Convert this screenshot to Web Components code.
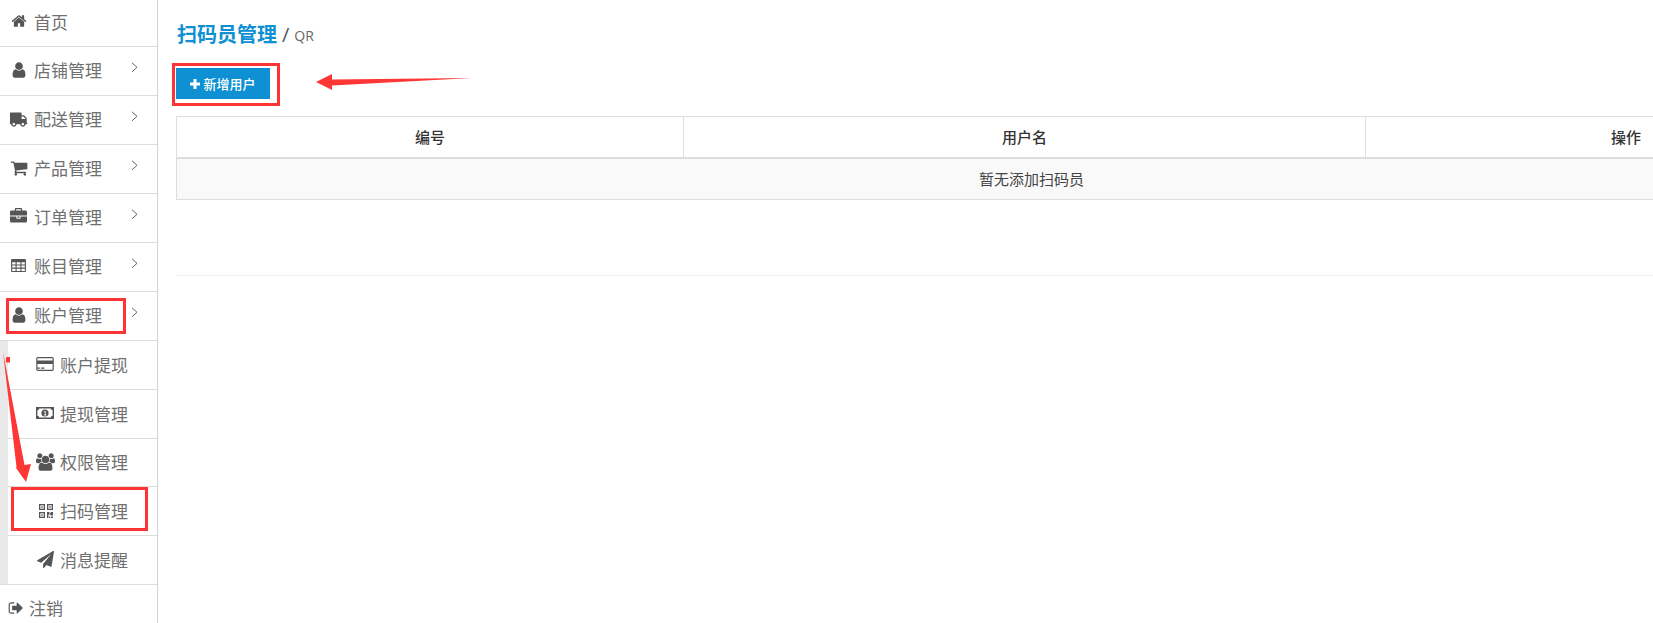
<!DOCTYPE html>
<html lang="zh">
<head>
<meta charset="utf-8">
<title>扫码员管理</title>
<style>
  html, body { margin: 0; padding: 0; height: 100%; background: #fff; overflow: hidden; }
  body { font-family: "Open Sans", "Noto Sans CJK SC", sans-serif; }
</style>
</head>
<body>
<admin-shell>
  <side-nav slot="nav">
    <nav-item icon="home" first>首页</nav-item>
    <nav-item icon="user" arrow>店铺管理</nav-item>
    <nav-item icon="truck" arrow>配送管理</nav-item>
    <nav-item icon="cart" arrow>产品管理</nav-item>
    <nav-item icon="briefcase" arrow>订单管理</nav-item>
    <nav-item icon="table" arrow>账目管理</nav-item>
    <nav-item icon="user" arrow>账户管理</nav-item>
    <nav-group>
      <nav-item icon="card" sub>账户提现</nav-item>
      <nav-item icon="money" sub>提现管理</nav-item>
      <nav-item icon="users" sub>权限管理</nav-item>
      <nav-item icon="qrcode" sub>扫码管理</nav-item>
      <nav-item icon="plane" sub>消息提醒</nav-item>
    </nav-group>
    <nav-item icon="signout" out>注销</nav-item>
  </side-nav>
  <page-head>扫码员管理<span slot="sub">QR</span></page-head>
  <add-button>新增用户</add-button>
  <data-table empty="暂无添加扫码员"></data-table>
</admin-shell>
<mark-layer></mark-layer>

<script>
// icon paths, font-awesome style shapes
const icons = {
  home: ['0 0 1792 1792', 'M1472 992v480q0 26-19 45t-45 19h-384v-384h-256v384h-384q-26 0-45-19t-19-45v-480q0-1 .5-3t.5-3l575-474 575 474q1 2 1 6zm223-69l-62 74q-8 9-21 11h-3q-13 0-21-7l-692-577-692 577q-12 8-24 7-13-2-21-11l-62-74q-8-10-7-23.5t11-21.5l719-599q32-26 76-26t76 26l244 204v-195q0-14 9-23t23-9h192q14 0 23 9t9 23v408l219 182q10 8 11 21.5t-7 23.5z'],
  user: ['0 0 1792 1792', 'M1536 1399q0 109-62.5 187t-150.5 78h-854q-88 0-150.5-78t-62.5-187q0-85 8.5-160.5t31.5-152 58.5-131 94-89 134.5-34.5q131 128 313 128t313-128q76 0 134.5 34.5t94 89 58.5 131 31.5 152 8.5 160.5zm-256-887q0 159-112.5 271.5t-271.5 112.5-271.5-112.5-112.5-271.5 112.5-271.5 271.5-112.5 271.5 112.5 112.5 271.5z'],
  truck: ['0 0 1792 1792', 'M640 1408q0-52-38-90t-90-38-90 38-38 90 38 90 90 38 90-38 38-90zm-384-512h384v-256h-158q-13 0-22 9l-195 195q-9 9-9 22v30zm1280 512q0-52-38-90t-90-38-90 38-38 90 38 90 90 38 90-38 38-90zm256-1088v1024q0 15-4 26.5t-13.5 18.5-16.5 11.5-23.5 6-22.5 2-25.5 0-22.5-.5q0 106-75 181t-181 75-181-75-75-181h-384q0 106-75 181t-181 75-181-75-75-181h-64q-3 0-22.5.5t-25.5 0-22.5-2-23.5-6-16.5-11.5-13.5-18.5-4-26.5q0-26 19-45t45-19v-320q0-8-.5-35t0-38 2.5-34.5 6.5-37 14-30.5 22.5-30l198-198q19-19 50.5-32t58.5-13h160v-192q0-26 19-45t45-19h1024q26 0 45 19t19 45z', 'scale(-1,1) translate(-1792,0)'],
  cart: ['0 0 1792 1792', 'M704 1536q0 52-38 90t-90 38-90-38-38-90 38-90 90-38 90 38 38 90zm896 0q0 52-38 90t-90 38-90-38-38-90 38-90 90-38 90 38 38 90zm128-1088v512q0 24-16.5 42.5t-40.5 21.5l-1044 122q13 60 13 70 0 16-24 64h920q26 0 45 19t19 45-19 45-45 19h-1024q-26 0-45-19t-19-45q0-11 8-31.5t16-36 21.5-40 15.5-29.5l-177-823h-204q-26 0-45-19t-19-45 19-45 45-19h256q16 0 28.5 6.5t19.5 15.5 13 24.5 8 26 5.5 29.5 4.5 26h1201q26 0 45 19t19 45z'],
  briefcase: ['0 0 1792 1792', 'M640 256h512v-128h-512v128zm1152 640v480q0 66-47 113t-113 47h-1472q-66 0-113-47t-47-113v-480h672v160q0 26 19 45t45 19h320q26 0 45-19t19-45v-160h672zm-768 0v128h-256v-128h256zm768-480v384h-1792v-384q0-66 47-113t113-47h352v-160q0-40 28-68t68-28h576q40 0 68 28t28 68v160h352q66 0 113 47t47 113z'],
  table: ['0 0 16 14', 'M1 0h14a1 1 0 0 1 1 1v12a1 1 0 0 1-1 1H1a1 1 0 0 1-1-1V1a1 1 0 0 1 1-1zm.2 3.4v2.4h3.6V3.4zm4.8 0v2.4h4V3.4zm5.2 0v2.4h3.6V3.4zM1.2 7v2.2h3.6V7zM6 7v2.2h4V7zm5.2 0v2.2h3.6V7zM1.2 10.4v2.4h3.6v-2.4zm4.8 0v2.4h4v-2.4zm5.2 0v2.4h3.6v-2.4z'],
  card: ['0 128 1920 1536', 'M1760 128q66 0 113 47t47 113v1216q0 66-47 113t-113 47h-1600q-66 0-113-47t-47-113v-1216q0-66 47-113t113-47h1600zm-1600 128q-13 0-22.5 9.5t-9.5 22.5v224h1664v-224q0-13-9.5-22.5t-22.5-9.5h-1600zm1600 1280q13 0 22.5-9.5t9.5-22.5v-608h-1664v608q0 13 9.5 22.5t22.5 9.5h1600zm-1632-128v-128h256v128h-256zm384 0v-128h384v128h-384z'],
  money: ['0 0 18 12', 'M0 0h18v12H0zm3.2 1.4a1.8 1.8 0 0 1-1.8 1.8v5.6a1.8 1.8 0 0 1 1.8 1.8h11.6a1.8 1.8 0 0 1 1.8-1.8V3.2a1.8 1.8 0 0 1-1.8-1.8zM9 2.4a3.6 3.6 0 1 1 0 7.2 3.6 3.6 0 0 1 0-7.2zM8.1 8.4h2.2v-.8h-.7V3.9h-.8l-1 .8.5.6.5-.3v2.6h-.7z'],
  users: ['0 0 1920 1792', 'M593 896q-162 5-265 128h-134q-82 0-138-40.5t-56-118.5q0-353 124-353 6 0 43.5 21t97.5 42.5 119 21.5q67 0 133-23-5 37-5 66 0 139 81 256zm1071 637q0 120-73 189.5t-194 69.5h-874q-121 0-194-69.5t-73-189.5q0-53 3.5-103.5t14-109 26.5-108.5 43-97.5 62-81 85.5-53.5 111.5-20q10 0 43 21.5t73 48 107 48 135 21.5 135-21.5 107-48 73-48 43-21.5q61 0 111.5 20t85.5 53.5 62 81 43 97.5 26.5 108.5 14 109 3.5 103.5zm-1024-1277q0 106-75 181t-181 75-181-75-75-181 75-181 181-75 181 75 75 181zm704 384q0 159-112.5 271.5t-271.5 112.5-271.5-112.5-112.5-271.5 112.5-271.5 271.5-112.5 271.5 112.5 112.5 271.5zm576 225q0 78-56 118.5t-138 40.5h-134q-103-123-265-128 81-117 81-256 0-29-5-66 66 23 133 23 59 0 119-21.5t97.5-42.5 43.5-21q124 0 124 353zm-128-609q0 106-75 181t-181 75-181-75-75-181 75-181 181-75 181 75 75 181z'],
  qrcode: ['0 0 14 14', 'M0 0h6v6H0zm1.3 1.3v3.4h3.4V1.3zM2.3 2.3h1.4v1.4H2.3zM8 0h6v6H8zm1.3 1.3v3.4h3.4V1.3zm1 1h1.4v1.4h-1.4zM0 8h6v6H0zm1.3 1.3v3.4h3.4V9.3zm1 1h1.4v1.4H2.3zM8 8h2.4v1.4h1.2V8H14v3.6h-2.4v-1H9.4V14H8zm4 4.6h2V14h-2zm-2 0h1.2V14H10z'],
  plane: ['0 0 1792 1792', 'M1764 11q33 24 27 64l-256 1536q-5 29-32 45-14 8-31 8-11 0-24-5l-453-185-242 295q-18 23-49 23-13 0-22-4-19-7-30.5-23.5t-11.5-36.5v-349l864-1059-1069 925-395-162q-37-14-40-55-2-40 32-59l1664-960q15-9 32-9 20 0 36 11z'],
  signout: ['0 0 1664 1792', 'M704 1440q0 4 1 20t.5 26.5-3 23.5-10 19.5-20.5 6.5h-320q-119 0-203.5-84.5t-84.5-203.5v-704q0-119 84.5-203.5t203.5-84.5h320q13 0 22.5 9.5t9.5 22.5q0 4 1 20t.5 26.5-3 23.5-10 19.5-20.5 6.5h-320q-66 0-113 47t-47 113v704q0 66 47 113t113 47h312l11.5 1 11.5 3 8 5.5 7 9 2 13.5zm928-544q0 26-19 45l-544 544q-19 19-45 19t-45-19-19-45v-288h-448q-26 0-45-19t-19-45v-384q0-26 19-45t45-19h448v-288q0-26 19-45t45-19 45 19l544 544q19 19 19 45z'],
  plus: ['0 0 12 12', 'M4.2 0h3.6v4.2H12v3.6H7.8V12H4.2V7.8H0V4.2h4.2z']
};

function iconSvg(name, w, h) {
  const [box, d, tf] = icons[name];
  return `<svg width="${w}" height="${h}" viewBox="${box}" fill="currentColor" aria-hidden="true"><path d="${d}"${tf ? ` transform="${tf}"` : ''} fill-rule="evenodd"/></svg>`;
}

// icon sizes per name, [width, height, left offset inside the row]
const iconBox = {
  home: [16, 16, 11], user: [18, 18, 10], truck: [18, 18, 10], cart: [18, 18, 10], briefcase: [17, 17, 10],
  table: [15, 13, 11], card: [18, 14, 36], money: [18, 12, 36], users: [19, 18, 36], qrcode: [14, 14, 39],
  plane: [17, 17, 37], signout: [15, 16, 8]
};

class AdminShell extends HTMLElement {
  constructor() {
    super();
    this.attachShadow({ mode: 'open' }).innerHTML = `
      <style>
        :host { display: grid; grid-template-columns: 158px minmax(0, 1fr); height: 623px; overflow: hidden; }
        .main { padding: 20px 0 0 18px; min-width: 0; overflow: hidden; }
      </style>
      <slot name="nav"></slot>
      <div class="main"><slot></slot></div>`;
  }
}

class SideNav extends HTMLElement {
  constructor() {
    super();
    this.attachShadow({ mode: 'open' }).innerHTML = `
      <style>
        :host { display: block; height: 623px; overflow: hidden; border-right: 1px solid #d2d2d2; box-sizing: border-box; }
      </style>
      <slot></slot>`;
  }
}

class NavGroup extends HTMLElement {
  constructor() {
    super();
    this.attachShadow({ mode: 'open' }).innerHTML = `
      <style>
        :host { display: block; padding-left: 8px; background: #e9e9e9; border-bottom: 1px solid #ddd; }
        .list { background: #fff; }
        ::slotted(nav-item:last-child) { border-bottom: 0; }
      </style>
      <div class="list"><slot></slot></div>`;
  }
}

class NavItem extends HTMLElement {
  constructor() {
    super();
    const name = this.getAttribute('icon');
    const [w, h, left] = iconBox[name];
    const rowLeft = this.hasAttribute('sub') ? left - 8 : left;
    const textLeft = this.hasAttribute('sub') ? 60 - 8 : this.hasAttribute('out') ? 29 : 34;
    const arrow = this.hasAttribute('arrow')
      ? '<svg class="arrow" width="7" height="11" viewBox="0 0 7 11"><path d="M1 .8 6 5.3 1 9.8" fill="none" stroke="#666" stroke-width="1"/></svg>'
      : '';
    this.attachShadow({ mode: 'open' }).innerHTML = `
      <style>
        :host { display: flex; align-items: center; height: 45px; padding-bottom: 3px; border-bottom: 1px solid #ddd;
          font: 17px "Noto Sans CJK SC", sans-serif; color: #707070; position: relative; }
        :host([first]) { height: 42px; padding-bottom: 4px; }
        :host([sub]) { height: 46.8px; padding-bottom: 1px; }
        :host([out]) { height: 46px; padding-bottom: 2px; }
        .ico { flex: none; display: flex; width: ${textLeft - rowLeft}px; margin-left: ${rowLeft}px; color: #555; }
        .arrow { position: absolute; left: 131px; top: 15px; }
      </style>
      <span class="ico">${iconSvg(name, w, h)}</span><slot></slot>${arrow}`;
  }
}

class PageHead extends HTMLElement {
  constructor() {
    super();
    this.attachShadow({ mode: 'open' }).innerHTML = `
      <style>
        :host { display: flex; align-items: baseline; height: 28px; line-height: 28px; margin-left: 1px; }
        h1 { margin: 0; font: bold 20px/28px "Noto Sans CJK SC", sans-serif; color: #0e90d2; }
        .sep { font: 20px/28px "Open Sans", sans-serif; color: #555; margin: 0 5px 0 5px; }
        .sub { font: 14px/27px "Open Sans", sans-serif; color: #666; position: relative; top: -1px; }
      </style>
      <h1><slot></slot></h1><span class="sep">/</span><span class="sub"><slot name="sub"></slot></span>`;
  }
}

class AddButton extends HTMLElement {
  constructor() {
    super();
    this.attachShadow({ mode: 'open' }).innerHTML = `
      <style>
        :host { display: flex; align-items: center; justify-content: center; gap: 3px; width: 94px; height: 31px; margin-top: 20px;
          background: #0e90d2; color: #fff; font: 500 13px "Noto Sans CJK SC", sans-serif; }
        span { display: flex; }
      </style>
      <span>${iconSvg('plus', 10, 10)}</span><slot></slot>`;
  }
}

class DataTable extends HTMLElement {
  constructor() {
    super();
    this.attachShadow({ mode: 'open' }).innerHTML = `
      <style>
        :host { display: block; margin-top: 17px; width: 1710px; font: 15px "Noto Sans CJK SC", sans-serif; color: #333; }
        .grid { display: grid; grid-template-columns: 506px 682px 1fr; border: 1px solid #ddd; border-width: 1px 0 1px 1px; }
        .th { height: 38px; padding-bottom: 2px; display: flex; align-items: center; justify-content: center; font-weight: 500; border-left: 1px solid #ddd; border-bottom: 2px solid #ddd; }
        .th:first-child { border-left: 0; }
        .td { grid-column: 1 / -1; height: 38px; padding-bottom: 2px; background: #f9f9f9; display: flex; align-items: center; justify-content: center; color: #444; }
        hr { border: 0; border-top: 1px solid #eee; margin: 75px 0 0; }
      </style>
      <div class="grid">
        <div class="th">编号</div><div class="th">用户名</div><div class="th">操作</div>
        <div class="td"><span id="msg"></span></div>
      </div>
      <hr>`;
    this.shadowRoot.getElementById('msg').textContent = this.getAttribute('empty');
  }
}

// red boxes and arrows drawn over the screenshot
class MarkLayer extends HTMLElement {
  constructor() {
    super();
    const box = (x, y, w, h) => `<rect x="${x}" y="${y}" width="${w}" height="${h}"/>`;
    this.attachShadow({ mode: 'open' }).innerHTML = `
      <style>
        :host { position: absolute; left: 0; top: 0; width: 1653px; height: 623px; pointer-events: none; }
        svg { display: block; }
        .boxes { fill: none; stroke: #ff3333; stroke-width: 3; }
      </style>
      <svg width="1653" height="623" viewBox="0 0 1653 623">
        <g class="boxes">
          ${box(173.5, 64.5, 105, 40)}
          ${box(7.5, 299.5, 117, 33)}
          ${box(12.5, 488.5, 134, 41)}
        </g>
        <g fill="#ff3636">
          <path d="M316 82 332 74 332 79.5 472 78 332 85.5 332 90Z"/>
          <path d="M3 352 24.5 465 31 464 26 482 16 468 16.5 467Z"/>
          <rect x="6" y="357" width="4" height="5.5"/>
        </g>
      </svg>`;
  }
}

customElements.define('admin-shell', AdminShell);
customElements.define('side-nav', SideNav);
customElements.define('nav-group', NavGroup);
customElements.define('nav-item', NavItem);
customElements.define('page-head', PageHead);
customElements.define('add-button', AddButton);
customElements.define('data-table', DataTable);
customElements.define('mark-layer', MarkLayer);
</script>
</body>
</html>
